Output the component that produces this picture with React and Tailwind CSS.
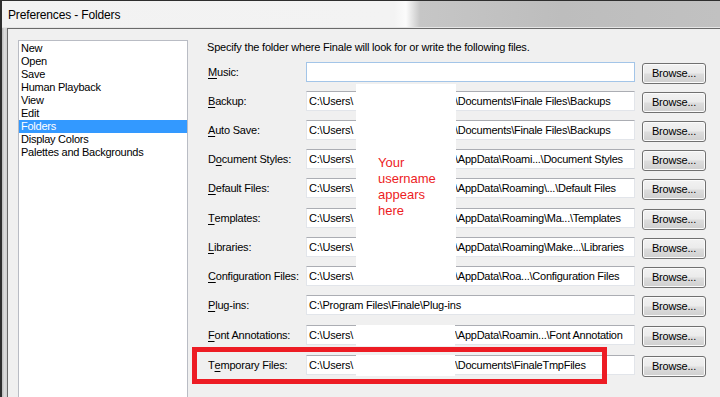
import React from 'react';

const items = ['New', 'Open', 'Save', 'Human Playback', 'View', 'Edit', 'Folders', 'Display Colors', 'Palettes and Backgrounds'];

const rows = [
  { pre: '', u: 'M', post: 'usic:', focus: true, h: 'h-[29px]' },
  { pre: '', u: 'B', post: 'ackup:', head: 'C:\\Users\\', tail: '\\Documents\\Finale Files\\Backups', h: 'h-[29px]' },
  { pre: '', u: 'A', post: 'uto Save:', head: 'C:\\Users\\', tail: '\\Documents\\Finale Files\\Backups', h: 'h-[29px]' },
  { pre: 'D', u: 'o', post: 'cument Styles:', head: 'C:\\Users\\', tail: '\\AppData\\Roami...\\Document Styles', h: 'h-[29px]' },
  { pre: '', u: 'D', post: 'efault Files:', head: 'C:\\Users\\', tail: '\\AppData\\Roaming\\...\\Default Files', h: 'h-[30px]' },
  { pre: '', u: 'T', post: 'emplates:', head: 'C:\\Users\\', tail: '\\AppData\\Roaming\\Ma...\\Templates', h: 'h-[29px]' },
  { pre: '', u: 'L', post: 'ibraries:', head: 'C:\\Users\\', tail: '\\AppData\\Roaming\\Make...\\Libraries', h: 'h-[29px]' },
  { pre: '', u: 'C', post: 'onfiguration Files:', head: 'C:\\Users\\', tail: '\\AppData\\Roa...\\Configuration Files', h: 'h-[29px]' },
  { pre: '', u: 'P', post: 'lug-ins:', value: 'C:\\Program Files\\Finale\\Plug-ins', h: 'h-[30px]' },
  { pre: '', u: 'F', post: 'ont Annotations:', head: 'C:\\Users\\', tail: '\\AppData\\Roamin...\\Font Annotation', cover: true, h: 'h-[30px]' },
  { pre: 'T', u: 'e', post: 'mporary Files:', head: 'C:\\Users\\', tail: '\\Documents\\FinaleTmpFiles', cover: true, h: 'h-[29px]' },
];

const FolderRow = ({ row }) => (
  <div className={`flex items-start ${row.h}`}>
    <div className="w-[99px] h-[20px] flex items-center pl-[1px] tracking-[-0.2px]">
      {row.pre}
      <span className="underline underline-offset-[2px]">{row.u}</span>
      {row.post}
    </div>
    <div className="relative">
      <div
        className={`w-[329px] h-[20px] bg-white border flex items-center pl-[2px] whitespace-nowrap overflow-hidden ${
          row.focus ? 'border-[#a3c5e8]' : 'border-[#e2e5ea] border-t-[#abadb3]'
        }`}
      >
        {row.value && <span className="tracking-[-0.2px]">{row.value}</span>}
        {row.head && (
          <>
            <span className="inline-block w-[146px] overflow-hidden tracking-[-0.2px]">{row.head}</span>
            <span className="tracking-[-0.25px]">{row.tail}</span>
          </>
        )}
      </div>
      {row.cover && <div className="absolute left-[50px] top-0 w-[99px] h-[21px] bg-white" />}
    </div>
    <button
      type="button"
      className="ml-[7px] mt-[1px] w-[64px] h-[21px] rounded-[3px] border border-[#707070] bg-[linear-gradient(#f2f2f2_0%,#ebebeb_48%,#dddddd_52%,#cfcfcf_100%)] shadow-[inset_0_0_0_1px_#fbfbfb] text-[11px] tracking-[-0.2px] leading-none text-black"
    >
      Browse...
    </button>
  </div>
);

const App = () => {
  return (
    <div
      className="relative w-[720px] h-[397px] overflow-hidden flex flex-col bg-[#d9d9d9] border-l-2 border-t border-[#2e2e2e] text-black text-[11px]"
      style={{ fontFamily: '"Liberation Sans", Arial, sans-serif' }}
    >
      {/* title bar */}
      <div className="h-[27px] shrink-0 flex items-center pl-[6px] bg-[linear-gradient(to_right,#f2f2f2_0px,#f3f3f3_392px,#fbfbfb_404px,#c6c6c6_418px,#bdbdbd_560px,#c1c1c1_100%)] border-b border-[#e6e6e6]">
        <span className="text-[12px] tracking-[-0.15px] pt-[1px]">Preferences - Folders</span>
      </div>

      <div className="flex-1 flex">
        <div className="w-[5px] shrink-0 bg-[linear-gradient(to_right,#b9b9b9,#dcdcdc,#cfcfcf)]" />
        <div className="flex-1 flex bg-[#f0f0f0] border-l border-t border-[#6a6a6a]">
          {/* category list */}
          <div className="ml-[10px] mt-[11px] w-[170px] shrink-0 bg-white border border-b-0 border-[#b9bcc4] pt-[1px] tracking-[-0.25px]">
            {items.map((it) => (
              <div
                key={it}
                className={`h-[13px] leading-[13px] pl-[2px] ${it === 'Folders' ? 'bg-[#3399ff] text-white' : ''}`}
              >
                {it}
              </div>
            ))}
          </div>

          {/* folder settings */}
          <div className="flex flex-col pl-[19px] pt-[11px]">
            <div className="h-[15px] flex items-center text-[11px] tracking-[-0.2px]">
              Specify the folder where Finale will look for or write the following files.
            </div>
            <div className="mt-[7px] flex flex-col">
              {rows.map((r) => (
                <FolderRow key={r.u + r.post} row={r} />
              ))}
            </div>
          </div>
        </div>
      </div>

      {/* username mask */}
      <div className="absolute left-[354px] top-[83px] w-[100px] h-[201px] bg-white pl-[22px] pt-[71px] text-[13px] leading-[16px] text-[#ed1c24]">
        Your
        <br />
        username
        <br />
        appears
        <br />
        here
      </div>

      {/* highlight */}
      <div className="absolute left-[190px] top-[346px] w-[415px] h-[37px] border-[5px] border-[#ed1c24]" />
    </div>
  );
};

export default App;
